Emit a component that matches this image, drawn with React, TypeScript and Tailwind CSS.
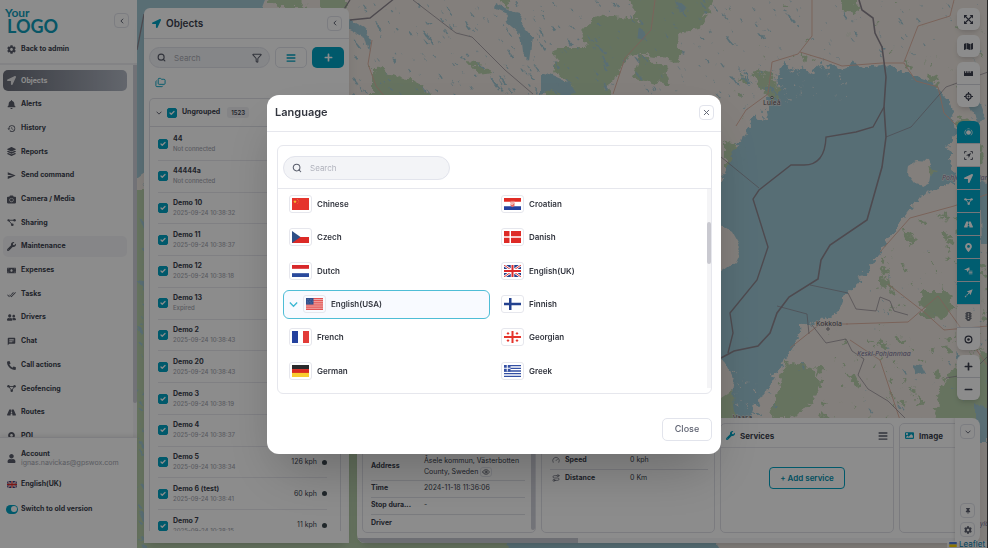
import React from "react"
import {
  FaBell,
  FaCamera,
  FaCog,
  FaImage,
  FaLayerGroup,
  FaLocationArrow,
  FaMap,
  FaMapMarkerAlt,
  FaMinus,
  FaMoneyBill,
  FaPhoneAlt,
  FaPlus,
  FaRoad,
  FaThumbtack,
  FaTrafficLight,
  FaUser,
  FaUserFriends,
  FaWrench,
} from "react-icons/fa"
import { MdChat, MdDoneAll, MdHistory, MdSend } from "react-icons/md"
import { Check, Eye, Filter, Folders, Gauge, Route, Search, X } from "lucide-react"

type IconType = React.ComponentType<{ className?: string }>

/* ---------- small drawn icons ---------- */

const NodesIcon: IconType = ({ className }) => (
  <svg viewBox="0 0 16 16" className={className} fill="currentColor">
    <path d="M3 4.5h10L8.5 11.5z" fill="none" stroke="currentColor" strokeWidth="1.6" />
    <circle cx="2.6" cy="4.2" r="2.2" />
    <circle cx="13.4" cy="4.2" r="2.2" />
    <circle cx="8.4" cy="12" r="2.2" />
  </svg>
)

const ShareIcon: IconType = ({ className }) => (
  <svg viewBox="0 0 16 16" className={className} fill="currentColor">
    <path d="M2.5 4h10M3 4.5l6 7" fill="none" stroke="currentColor" strokeWidth="1.6" />
    <circle cx="2.6" cy="4.2" r="2" />
    <circle cx="13.4" cy="4.2" r="2.2" />
    <circle cx="9.4" cy="12" r="2.4" />
  </svg>
)

const RadarIcon: IconType = ({ className }) => (
  <svg viewBox="0 0 16 16" className={className} fill="none">
    <circle cx="8" cy="8" r="4.2" fill="currentColor" />
    <path
      d="M3.6 13A6.8 6.8 0 0 1 3.6 3M12.4 3a6.8 6.8 0 0 1 0 10M6 1.6a6.8 6.8 0 0 1 4 0"
      stroke="currentColor"
      strokeWidth="1.3"
    />
  </svg>
)

const FocusIcon: IconType = ({ className }) => (
  <svg viewBox="0 0 16 16" className={className} fill="none">
    <path
      d="M1 4.5V1h3.5M11.5 1H15v3.5M15 11.5V15h-3.5M4.5 15H1v-3.5"
      stroke="currentColor"
      strokeWidth="1.5"
    />
    <path d="M12.5 3.500 3.500 7.600l4.300.7L8.500 12.500z" fill="currentColor" />
  </svg>
)

const TagArrowIcon: IconType = ({ className }) => (
  <svg viewBox="0 0 16 16" className={className} fill="currentColor">
    <path d="M9.500 2 0 6.800l5 .7L6.500 11 8 7.500h2z" />
    <path d="M8.500 8.500H15v1.400H8.500zM8.500 11H15v1.400H8.500zM8.500 13.300H15v1.200H8.500z" />
  </svg>
)

const TailIcon: IconType = ({ className }) => (
  <svg viewBox="0 0 16 16" className={className} fill="currentColor">
    <path d="M15.500.5 5 4.500l4.500 2 2 4.500z" />
    <path d="m9.500 6.500-8 8" stroke="currentColor" strokeWidth="1.800" strokeDasharray="3 1" />
  </svg>
)

const TargetIcon: IconType = ({ className }) => (
  <svg viewBox="0 0 16 16" className={className} fill="none">
    <circle cx="8" cy="8" r="6" stroke="currentColor" strokeWidth="2.200" />
    <circle cx="8" cy="8" r="2.300" fill="currentColor" />
  </svg>
)

const CrosshairIcon: IconType = ({ className }) => (
  <svg viewBox="0 0 16 16" className={className} fill="none">
    <circle cx="8" cy="8" r="4.600" stroke="currentColor" strokeWidth="2" />
    <path d="M8 0v4M8 12v4M0 8h4M12 8h4" stroke="currentColor" strokeWidth="2" />
    <circle cx="8" cy="8" r="1.800" fill="currentColor" />
  </svg>
)

const ExpandIcon: IconType = ({ className }) => (
  <svg viewBox="0 0 16 16" className={className} fill="currentColor">
    <path d="M0 0h6L0 6zM16 0v6l-6-6zM0 16v-6l6 6zM16 16h-6l6-6z" />
    <path d="m2 2 12 12M14 2 2 14" stroke="currentColor" strokeWidth="2.400" />
  </svg>
)

const RulerIcon: IconType = ({ className }) => (
  <svg viewBox="0 0 16 16" className={className} fill="currentColor">
    <path d="M0 4h2.200v3h1.600V4h2.400v3h1.600V4h2.400v3h1.600V4H16v8.500H0z" />
  </svg>
)

const BarsIcon: IconType = ({ className }) => (
  <svg viewBox="0 0 16 16" className={className} fill="currentColor">
    <path d="M1 2h14v2.200H1zM1 6.900h14v2.200H1zM1 11.800h14V14H1z" />
  </svg>
)

const ChevronDown: IconType = ({ className }) => (
  <svg viewBox="0 0 16 16" className={className} fill="none" stroke="currentColor">
    <path d="m1.500 4.500 6.500 6.500 6.500-6.500" strokeWidth="2.400" />
  </svg>
)

const ChevronLeft: IconType = ({ className }) => (
  <svg viewBox="0 0 16 16" className={className} fill="none" stroke="currentColor">
    <path d="M11 2 5 8l6 6" strokeWidth="2.600" />
  </svg>
)

/* ---------- flags ---------- */

const flags: Record<string, React.ReactNode> = {
  Chinese: (
    <>
      <path fill="#e5342c" d="M0 0h34v22H0z" />
      <path fill="#f6c532" d="m6 3 1 2.600h2.600L7.500 7l.8 2.600L6 8 3.700 9.600 4.500 7 2.400 5.600H5z" />
      <path fill="#f6c532" d="M11 2h1v1h-1zM13 4h1v1h-1zM13 7h1v1h-1zM11 9h1v1h-1z" />
    </>
  ),
  Croatian: (
    <>
      <path fill="#fff" d="M0 0h34v22H0z" />
      <path fill="#e02b24" d="M0 0h34v7H0z" />
      <path fill="#24419e" d="M0 15h34v7H0z" />
      <path fill="#e66a62" d="M13 5h8v9l-4 3-4-3z" />
      <path fill="#fff" d="M15 7h2v2h-2zM19 7h2v2h-2zM13 9h2v2h-2zM17 9h2v2h-2zM15 11h2v2h-2z" />
    </>
  ),
  Czech: (
    <>
      <path fill="#fff" d="M0 0h34v11H0z" />
      <path fill="#dc2a26" d="M0 11h34v11H0z" />
      <path fill="#2f4f86" d="m0 0 17 11L0 22z" />
    </>
  ),
  Danish: (
    <>
      <path fill="#de2a26" d="M0 0h34v22H0z" />
      <path fill="#fff" d="M11 0h3v22h-3z M0 9.500h34v3H0z" />
    </>
  ),
  Dutch: (
    <>
      <path fill="#fff" d="M0 0h34v22H0z" />
      <path fill="#d8282a" d="M0 0h34v7H0z" />
      <path fill="#2a4a9c" d="M0 15h34v7H0z" />
    </>
  ),
  "English(UK)": (
    <>
      <path fill="#27408b" d="M0 0h34v22H0z" />
      <path stroke="#fff" strokeWidth="4.500" d="m0 0 34 22M34 0 0 22" />
      <path stroke="#dc2a2a" strokeWidth="1.800" d="m0 0 34 22M34 0 0 22" />
      <path fill="#fff" d="M13.500 0h7v22h-7zM0 7.500h34v7H0z" />
      <path fill="#dc2a2a" d="M15 0h4v22h-4zM0 9h34v4H0z" />
    </>
  ),
  "English(USA)": (
    <>
      <path fill="#f3b6b4" d="M0 0h34v22H0z" />
      <path
        stroke="#dd3f3f"
        strokeWidth="1.700"
        d="M0 1h34M0 4.400h34M0 7.800h34M0 11.200h34M0 14.600h34M0 18h34M0 21.200h34"
      />
      <path fill="#2f4f8c" d="M0 0h15v12H0z" />
      <path stroke="#8fa3cc" strokeDasharray="1 2" d="M2 3h12M3 6h11M2 9h12" />
    </>
  ),
  Finnish: (
    <>
      <path fill="#fff" d="M0 0h34v22H0z" />
      <path fill="#24428f" d="M10 0h5v22h-5zM0 8.500h34v5H0z" />
    </>
  ),
  French: (
    <>
      <path fill="#fff" d="M0 0h34v22H0z" />
      <path fill="#24419e" d="M0 0h12v22H0z" />
      <path fill="#e23b38" d="M22 0h12v22H22z" />
    </>
  ),
  Georgian: (
    <>
      <path fill="#fff" d="M0 0h34v22H0z" />
      <path fill="#e5342c" d="M15 0h4v22h-4zM0 9h34v4H0z" />
      <path
        fill="#e5342c"
        d="M7 2h2v5H7zM5.500 3.500h5v2h-5zM25 2h2v5h-2zM23.500 3.500h5v2h-5zM7 15h2v5H7zM5.500 16.500h5v2h-5zM25 15h2v5h-2zM23.500 16.500h5v2h-5z"
      />
    </>
  ),
  German: (
    <>
      <path fill="#2a2a2c" d="M0 0h34v8H0z" />
      <path fill="#d9281f" d="M0 7.500h34V15H0z" />
      <path fill="#f8cc2e" d="M0 14.500h34V22H0z" />
    </>
  ),
  Greek: (
    <>
      <path fill="#fff" d="M0 0h34v22H0z" />
      <path
        stroke="#3450a4"
        strokeWidth="2.500"
        d="M0 1.200h34M0 6.100h34M0 11h34M0 15.900h34M0 20.800h34"
      />
      <path fill="#3450a4" d="M0 0h13v12H0z" />
      <path fill="#fff" d="M5.500 0h2v12h-2zM0 5h13v2H0z" />
    </>
  ),
}

const Flag: React.FC<{ name: string; className?: string }> = ({ name, className }) => (
  <svg viewBox="0 0 34 22" preserveAspectRatio="none" className={className} aria-hidden="true">
    {flags[name]}
  </svg>
)

/* ---------- map ---------- */

// small repeatable generator, so lakes and woods keep their place between renders
const createRandom = (seed: number) => () => {
  seed = (seed * 16807) % 2147483647
  return seed / 2147483647
}

const scatter = (
  seed: number,
  count: number,
  box: [number, number, number, number],
  size: number,
  stretch: number
) => {
  const random = createRandom(seed * 7919)
  let d = ""
  for (let i = 0; i < count; i++) {
    const x = box[0] + random() * box[2]
    const y = box[1] + random() * box[3]
    const r = 0.5 + random() * random() * size
    const lean = (0.3 + random() * 0.7) * stretch * r
    d += `M${x.toFixed(1)} ${y.toFixed(1)}l${r.toFixed(1)} ${(r * 0.3).toFixed(1)} ${lean.toFixed(1)} ${(lean * 1.2).toFixed(1)} ${(-r).toFixed(1)} ${(r * 0.4).toFixed(1)}z`
  }
  return d
}

const SEA =
  "M783 58 790 72 802 67 812 72 822 63 838 70 854 63 870 68 883 65 903 72 918 78 932 83 948 100 954 117 956 133 948 150 954 167 952 183 932 190 920 197 907 213 895 230 875 260 858 283 846 293 838 313 818 320 802 327 789 353 777 373 765 393 757 403 751 420 740 440 715 560 507 560 500 300 680 220 721 182 736 147 747 133 752 118 768 120 766 100 780 98 776 82Z"

const Map = () => (
  <svg
    viewBox="137 0 851 548"
    preserveAspectRatio="xMinYMin slice"
    className="absolute inset-0 size-full"
    fill="none"
    aria-hidden="true"
  >
    <defs>
      <filter id="ragged" x="-5%" y="-5%" width="110%" height="110%">
        <feTurbulence type="fractalNoise" baseFrequency="0.14" numOctaves="3" seed="4" />
        <feDisplacementMap
          in="SourceGraphic"
          scale="12"
          xChannelSelector="R"
          yChannelSelector="G"
        />
      </filter>
      <filter id="wavy" x="-5%" y="-5%" width="110%" height="110%">
        <feTurbulence type="fractalNoise" baseFrequency="0.06" numOctaves="3" seed="9" />
        <feDisplacementMap
          in="SourceGraphic"
          scale="9"
          xChannelSelector="R"
          yChannelSelector="G"
        />
      </filter>
    </defs>
    <path fill="#efe8e2" d="M137 0h851v548H137z" />
    <g filter="url(#ragged)">
      <path
        fill="#bad2ae"
        d="M596 15l41 5-10-24h88l-16 34-21 3 2 28-49-8-17 27-16 13-20-3-25-17 4-26h29l-4-17zM640 55l-9 22 40 8-6-17-15-8zM545 84l62 3 6 12h-68zM372 66l20 8 32 12 8 14h-60zM497-4h14l-4 14zM467 62l18 2 5 10-10 2zM838-4h22l-4 16-14-4zM755 68l14 4 14 24-10 8-16-20zM725 140l12 6-2 18-10 4zM800 50l8 4-2 8zM905 62l6 4-2 6zM930 74l8 4-3 8-8-4z"
      />
      <path fill="#bad2ae" d="M120 190h30v-12l220 270v10h145v100H120zM345 440h20v110h-20z" />
      <path
        fill="#bad2ae"
        d="M920 292h26l8 14-12 14-18-2zM952 370l40-18v80h-60l8-40zM785 362l26 4 12 16-12 22-20 14h-22l8-24zM957 116l18 6 8 40-20 10zM962 240l14 6-2 14-12 2zM900 230l14 4-4 8zM880 276l10 4 2 10-12-4zM846 372l14 8-4 8zM262-6h30l16 14h-30zM320-4h26v14h-26z"
      />
      <path fill="#bad2ae" d={scatter(77, 130, [870, 200, 118, 220], 7, 0.8)} />
      <path fill="#bad2ae" d={scatter(19, 70, [800, 330, 188, 90], 6, 0.8)} />
      <path fill="#bad2ae" d={scatter(41, 50, [720, 0, 268, 130], 5, 0.8)} />
    </g>
    <g filter="url(#wavy)">
      <path
        fill="#a3c8d4"
        d="M496 2l10 6 14 4-2 10 14 16-3 22-8-8-2-18-14-12 4-8-14-6zM541 72l12 4 18 8 6 10-10 2-14-6-12 4zM350 20l14 8 8 12-3 12-4-14-15-8zM640 28l7 4-3 8-6-2zM676 0l8 6-4 6zM966 88l10-4 2 14 8 22-8 4-8-18zM956 350l10 10 8 6-4 8-12-8zM912 364l10 2 4 8-10 2zM975 402l14 10v30h-14zM980 180l10 4v60h-8z"
      />
      <path fill="#a3c8d4" d={scatter(5, 210, [350, 0, 250, 96], 2.4, 3)} />
      <path fill="#a3c8d4" d={scatter(8, 130, [600, 0, 200, 96], 2.2, 3)} />
      <path fill="#a3c8d4" d={scatter(23, 50, [800, 0, 188, 60], 1.6, 3)} />
      <path fill="#a3c8d4" d={scatter(31, 40, [860, 250, 128, 168], 1.6, 2)} />
      <path fill="#a3c8d4" d={scatter(35, 40, [960, 60, 30, 360], 3, 2)} />
      <path fill="#a3c8d4" d={scatter(91, 60, [137, 180, 10, 368], 5, 2)} />
      <path fill="#a3c8d4" d="M120-10h148l-30 80-90 100-28 20z" />
    </g>
    <g filter="url(#ragged)">
      <path fill="#9fc9d6" d={SEA} />
      <path fill="#9fc9d6" d={scatter(55, 80, [738, 66, 60, 100], 2.6, 2.4)} />
      <path fill="#9fc9d6" d={scatter(58, 50, [732, 330, 70, 88], 3, 2)} />
      <path fill="#efe8e2" d={scatter(64, 60, [745, 64, 100, 40], 1.6, 1.4)} />
      <path fill="#efe8e2" d={scatter(66, 40, [725, 370, 50, 50], 2, 1.4)} />
    </g>
    <g filter="url(#wavy)">
      <path
        fill="#efe8e2"
        d="M718 222l14 10 9 16-6 14-17 12zM910 166l8-5 10 1 3 7-2 12-8 4-6-2-6-8zM716 352l10 14 8 14-6 40h-12z"
      />
      <path fill="#bad2ae" d="M720 398l12-8 4 30h-16zM928 168l9 2-6 4z" />
    </g>
    <g stroke="#dfb5a5" strokeWidth="1">
      <path d="M372 40l-4 24 8 22 10 12M655 0l-4 30-26 28-12 36M812 0v36l-14 18-26 8-4 32-22 16-10 16M800 52l26 8 16 6 40-3 22 0 12 18 22 6 6 26 12 12M904 62l14-36 32-10 4-16M880 252l30-34 44-12 34-12M846 324l62-2 30-26 50 70M888 284l36 28 20 18 44-4M790 348l30-24 28 0M900 420l-20-60-30-20" />
    </g>
    <g stroke="#8e8790" strokeWidth="1">
      <path
        strokeWidth="1.600"
        d="M859 0l3 10 11 8 2 15 7 14 4 30-2 30 2 30-4 30-15 53-37 25-9 15-3 19-29 18-12 16-7 20-12 13-24 5-13 7"
      />
      <path
        strokeWidth="1.400"
        d="M884 107l-11 20-17 5-30 5q-1 28-22 28h-13l-32 25-6 9 15 48-11 33-27 33 3 20-5 20"
      />
      <path
        strokeWidth="0.700"
        d="M886 137l25-10 35-40 42-15M721 157l38 31M810 285l38 8M777 306l30 8 2 20M413 0l43 33 16 4 33 33 28 24M848 293l8 16 20 2 4-14 10 4 4 10 14 4M812 325l14 18 20-4 6 12 12 8-6 16 10 14 20 12 18 18M988 356l-18 18-24 4"
      />
      <path strokeWidth="1.300" d="M350 20l20-2 25-20M350 0l-13 20M144 14l-7 36" />
    </g>
    <g
      fill="#55525c"
      stroke="#efe8e2"
      strokeWidth="1"
      paintOrder="stroke"
      fontFamily="'Noto Sans', sans-serif"
      fontSize="7"
    >
      <text x="763" y="105">Luleå</text>
      <text x="816" y="326">Kokkola</text>
      <text x="733" y="420">Vaasa</text>
      <g fontStyle="italic" fill="#77739a">
        <text x="857" y="356">Keski-Pohjanmaa</text>
        <text x="942" y="180">Pohjois-Pohjanmaa</text>
        <text x="980" y="526">ylä</text>
      </g>
    </g>
    <g stroke="#55525c" strokeWidth="0.800" fill="#fff">
      <circle cx="772" cy="97.500" r="1.200" />
      <circle cx="828" cy="329" r="1.200" />
    </g>
  </svg>
)

/* ---------- shared bits ---------- */

const CheckBox: React.FC<{ label: string }> = ({ label }) => (
  <span className="relative flex size-[10px] shrink-0">
    <input
      type="checkbox"
      defaultChecked
      aria-label={label}
      className="peer size-[10px] appearance-none rounded-[2px] border border-[#00a3c4] checked:bg-[#00a3c4]"
    />
    <Check
      className="pointer-events-none absolute inset-[2px] hidden size-[6px] text-white peer-checked:block"
      strokeWidth={5}
    />
  </span>
)

const SquareButton: React.FC<{ label: string; children: React.ReactNode }> = ({
  label,
  children,
}) => (
  <button
    type="button"
    aria-label={label}
    className="flex size-[15px] shrink-0 items-center justify-center rounded-[4px] border border-[#e2e4ec] text-[#5d6170]"
  >
    {children}
  </button>
)

/* ---------- sidebar ---------- */

const navItems: { name: string; Icon: IconType }[] = [
  { name: "Objects", Icon: FaLocationArrow },
  { name: "Alerts", Icon: FaBell },
  { name: "History", Icon: MdHistory },
  { name: "Reports", Icon: FaLayerGroup },
  { name: "Send command", Icon: MdSend },
  { name: "Camera / Media", Icon: FaCamera },
  { name: "Sharing", Icon: ShareIcon },
  { name: "Maintenance", Icon: FaWrench },
  { name: "Expenses", Icon: FaMoneyBill },
  { name: "Tasks", Icon: MdDoneAll },
  { name: "Drivers", Icon: FaUserFriends },
  { name: "Chat", Icon: MdChat },
  { name: "Call actions", Icon: FaPhoneAlt },
  { name: "Geofencing", Icon: NodesIcon },
  { name: "Routes", Icon: FaRoad },
  { name: "POI", Icon: FaMapMarkerAlt },
]

const navStyle = (name: string) => {
  if (name === "Objects") return "bg-linear-to-r from-[#6c707c] to-[#b4bac6] text-white"
  if (name === "Maintenance") return "bg-[#f5f5f7]"
  return ""
}

const Sidebar = () => (
  <aside className="flex w-[137px] shrink-0 flex-col bg-white text-[7px] font-bold text-[#3b3f4e]">
    <div className="flex h-[65px] shrink-0 flex-col justify-between border-b-2 border-[#eeeef2] pt-[8px] pr-[8px] pb-[9px] pl-[5px]">
      <div className="flex items-start justify-between">
        <div className="font-['Lato'] text-[#0f9dba]">
          <div className="text-[12px] leading-[10px]">Your</div>
          <div className="pl-[2px] text-[18px] leading-[16px]">LOGO</div>
        </div>
        <div className="pt-[5px]">
          <SquareButton label="Collapse menu">
            <ChevronLeft className="size-[6px]" />
          </SquareButton>
        </div>
      </div>
      <a href="#admin" className="flex items-center gap-[5px] pl-[2px] leading-[10px]">
        <FaCog className="size-[9px] text-[#5a5e6c]" />
        Back to admin
      </a>
    </div>
    <div className="flex min-h-0 flex-1">
      <nav className="flex-1 overflow-hidden pt-[4px] pr-[6px] pl-[3px]">
        <div className="flex h-[379px] flex-col">
          {navItems.map(({ name, Icon }) => (
            <a key={name} href={`#${name}`} className="flex flex-1 items-center">
              <span
                className={`flex h-[21px] w-full items-center gap-[5px] rounded-[5px] pl-[4px] ${navStyle(name)}`}
              >
                <Icon className="size-[9px] shrink-0 opacity-85" />
                {name}
              </span>
            </a>
          ))}
        </div>
      </nav>
      <div className="w-[4px] bg-[#f6f6f8]">
        <div className="h-[338px] rounded-b-full bg-[#d0d1da]" />
      </div>
    </div>
    <div className="z-10 flex h-[111px] shrink-0 flex-col border-t border-[#e6e6ec] bg-white pt-[11px] pl-[7px] shadow-[0_-2px_4px_rgba(0,0,0,0.08)]">
      <a href="#account" className="flex items-center gap-[5px]">
        <FaUser className="size-[9px] text-[#5a5e6c]" />
        <span className="leading-[9px]">
          Account
          <span className="block font-normal text-[#a5a7b1]">ignas.navickas@gpswox.com</span>
        </span>
      </a>
      <button type="button" className="mt-[12px] flex items-center gap-[4px] text-left leading-[10px]">
        <Flag name="English(UK)" className="h-[7px] w-[10px] rounded-[2px]" />
        English(UK)
      </button>
      <label className="mt-[15px] -ml-[1px] flex items-center gap-[3px] leading-[10px]">
        <input type="checkbox" role="switch" defaultChecked className="peer sr-only" />
        <span className="flex h-[9px] w-[12px] items-center justify-end rounded-full bg-[#00a3c4] pr-[1px]">
          <span className="size-[6px] rounded-full bg-white" />
        </span>
        Switch to old version
      </label>
    </div>
  </aside>
)

/* ---------- objects panel ---------- */

const objects: { name: string; status: string; speed?: string }[] = [
  { name: "44", status: "Not connected" },
  { name: "44444a", status: "Not connected" },
  { name: "Demo 10", status: "2025-09-24 10:38:32" },
  { name: "Demo 11", status: "2025-09-24 10:38:37" },
  { name: "Demo 12", status: "2025-09-24 10:38:18" },
  { name: "Demo 13", status: "Expired" },
  { name: "Demo 2", status: "2025-09-24 10:38:43" },
  { name: "Demo 20", status: "2025-09-24 10:38:43" },
  { name: "Demo 3", status: "2025-09-24 10:38:19" },
  { name: "Demo 4", status: "2025-09-24 10:38:37" },
  { name: "Demo 5", status: "2025-09-24 10:38:34", speed: "126 kph" },
  { name: "Demo 6 (test)", status: "2025-09-24 10:38:41", speed: "60 kph" },
  { name: "Demo 7", status: "2025-09-24 10:38:15", speed: "11 kph" },
]

const ObjectsPanel = () => (
  <section className="flex w-[205px] shrink-0 flex-col rounded-t-[6px] bg-white pb-[12px] text-[#3b3f4e] shadow-lg">
    <header className="flex h-[31px] shrink-0 items-center gap-[5px] border-b border-[#e6e6ec] pr-[7px] pl-[8px]">
      <FaLocationArrow className="size-[9px] text-[#00a3c4]" />
      <h2 className="flex-1 text-[10px] font-semibold">Objects</h2>
      <SquareButton label="Collapse panel">
        <ChevronLeft className="size-[6px]" />
      </SquareButton>
    </header>
    <div className="mx-[5px] mt-[8px] flex h-[21px] shrink-0 gap-[5px]">
      <label className="flex flex-1 items-center gap-[8px] rounded-full border border-[#e2e4ec] bg-[#f3f4f7] px-[7px]">
        <Search className="size-[9px] shrink-0 text-[#5a5e6c]" strokeWidth={3} />
        <input
          type="text"
          aria-label="Search objects"
          placeholder="Search"
          className="w-0 flex-1 bg-transparent text-[8px] outline-none placeholder:text-[#a9abb5]"
        />
        <Filter className="size-[10px] shrink-0 text-[#5a5e6c]" strokeWidth={2.5} />
      </label>
      <button
        type="button"
        aria-label="List view"
        className="flex w-[32px] items-center justify-center rounded-[5px] border border-[#e2e4ec]"
      >
        <BarsIcon className="size-[10px] text-[#00a3c4]" />
      </button>
      <button
        type="button"
        aria-label="Add object"
        className="flex w-[32px] items-center justify-center rounded-[5px] bg-[#00a3c4]"
      >
        <FaPlus className="size-[9px] text-white" />
      </button>
    </div>
    <button type="button" aria-label="Groups" className="mt-[9px] ml-[11px] shrink-0 self-start">
      <Folders className="size-[11px] text-[#00a3c4]" strokeWidth={2} />
    </button>
    <div className="mt-[10px] mr-[8px] ml-[5px] flex min-h-0 flex-1 flex-col overflow-hidden rounded-t-[5px] border border-b-0 border-[#e0e1e8]">
      <div className="flex h-[28px] shrink-0 items-center gap-[5px] border-b border-[#e0e1e8] pl-[6px]">
        <ChevronDown className="size-[6px] text-[#5a5e6c]" />
        <CheckBox label="Ungrouped" />
        <span className="text-[7px] font-bold">Ungrouped</span>
        <span className="ml-[2px] rounded-[3px] bg-[#f0f1f4] px-[4px] text-[6px] leading-[11px] font-semibold">
          1523
        </span>
      </div>
      <ul className="mt-[2px] flex h-[413px] shrink-0 flex-col pr-[13px] pl-[8px]">
        {objects.map(({ name, status, speed }) => (
          <li key={name} className="flex flex-1 items-center gap-[5px] border-b border-[#e9e9ef]">
            <CheckBox label={name} />
            <span className="flex-1">
              <span className="block text-[7px] leading-[10px] font-bold">{name}</span>
              <span className="block text-[6px] leading-[10px] font-medium text-[#a5a7b1]">
                {status}
              </span>
            </span>
            {speed && (
              <>
                <span className="text-[7px]">{speed}</span>
                <span className="size-[5px] rounded-full bg-[#3b474e]" />
              </>
            )}
          </li>
        ))}
      </ul>
    </div>
  </section>
)

/* ---------- bottom widgets ---------- */

const details = [
  { label: "Time", value: "2024-11-18 11:36:06" },
  { label: "Stop dura...", value: "-" },
  { label: "Driver", value: "" },
]

const WidgetHeader: React.FC<{ Icon: IconType; title: string; menu?: boolean }> = ({
  Icon,
  title,
  menu,
}) => (
  <header className="flex h-[24px] items-center gap-[5px] border-b border-[#e6e6ec] px-[5px]">
    <Icon className="size-[9px] text-[#00a3c4]" />
    <h3 className="flex-1 text-[8px] font-bold">{title}</h3>
    {menu && (
      <button type="button" aria-label={`${title} menu`}>
        <BarsIcon className="size-[10px] text-[#5a5e6c]" />
      </button>
    )}
  </header>
)

const card = "w-[174px] shrink-0 rounded-[5px] border border-[#e0e1e8]"

const Widgets = () => (
  <section className="flex h-[125px] w-full overflow-hidden rounded-[8px] bg-white text-[8px] text-[#3b3f4e] shadow-lg">
    <div className="flex min-w-0 flex-1 flex-col overflow-hidden">
      <div className="flex h-[115px] gap-[5px] overflow-hidden pt-[5px] pl-[5px]">
        <div className={`${card} flex`}>
          <table className="mt-[29px] mr-[6px] ml-[8px] h-[78px] flex-1 table-fixed text-left text-[7px]">
            <tbody>
              <tr className="h-[27px] border-b border-[#e0e1e8]">
                <th className="w-[53px] font-bold">Address</th>
                <td className="leading-[11px]">
                  Åsele kommun, Västerbotten
                  <br />
                  County, Sweden{" "}
                  <button
                    type="button"
                    aria-label="Show address"
                    className="rounded-[3px] border border-[#e2e4ec] px-[1px] align-middle"
                  >
                    <Eye className="size-[8px]" />
                  </button>
                </td>
              </tr>
              {details.map(({ label, value }) => (
                <tr key={label} className="h-[17px] border-b border-[#e0e1e8] last:border-0">
                  <th className="font-bold">{label}</th>
                  <td>{value}</td>
                </tr>
              ))}
            </tbody>
          </table>
          <div className="mb-[2px] w-[4px] rounded-b-full bg-[#d0d1da]" />
        </div>
        <div className={card}>
          <table className="mt-[28px] ml-[8px] w-[158px] table-fixed text-left text-[7px]">
            <tbody>
              <tr className="h-[17px] border-b border-[#e0e1e8]">
                <th className="w-[80px] font-bold">
                  <Gauge className="mr-[5px] ml-[2px] inline size-[8px] text-[#5a5e6c]" />
                  Speed
                </th>
                <td>0 kph</td>
              </tr>
              <tr className="h-[17px]">
                <th className="font-bold">
                  <Route className="mr-[5px] ml-[2px] inline size-[8px] text-[#5a5e6c]" />
                  Distance
                </th>
                <td>0 Km</td>
              </tr>
            </tbody>
          </table>
        </div>
        <div className={card}>
          <WidgetHeader Icon={FaWrench} title="Services" menu />
          <div className="flex justify-center pt-[19px]">
            <button
              type="button"
              className="h-[22px] rounded-[4px] border border-[#00a3c4] px-[10px] text-[8px] font-semibold text-[#0090ae]"
            >
              + Add service
            </button>
          </div>
        </div>
        <div className={card}>
          <WidgetHeader Icon={FaImage} title="Image" />
        </div>
      </div>
      <div className="mt-[5px] h-[5px] bg-[#f6f6f8]">
        <div className="h-[5px] w-[221px] bg-[#c6c8d2]" />
      </div>
    </div>
    <div className="flex w-[25px] shrink-0 flex-col items-center gap-[4px] py-[6px] shadow-[-1px_0_3px_rgba(0,0,0,0.1)]">
      <SquareButton label="Hide widgets">
        <ChevronDown className="size-[6px]" />
      </SquareButton>
      <span className="flex-1" />
      <SquareButton label="Pin widgets">
        <FaThumbtack className="size-[6px]" />
      </SquareButton>
      <SquareButton label="Widget settings">
        <FaCog className="size-[8px]" />
      </SquareButton>
    </div>
  </section>
)

/* ---------- map toolbar ---------- */

interface Tool {
  label: string
  Icon: IconType
  look?: "active" | "clear"
}

const toolGroups: Tool[][] = [
  [{ label: "Full screen", Icon: ExpandIcon }],
  [{ label: "Map type", Icon: FaMap }],
  [
    { label: "Ruler", Icon: RulerIcon },
    { label: "My location", Icon: CrosshairIcon },
  ],
  [
    { label: "Show objects", Icon: RadarIcon, look: "active" },
    { label: "Fit objects", Icon: FocusIcon },
    { label: "Arrows", Icon: FaLocationArrow, look: "active" },
    { label: "Geofences", Icon: NodesIcon, look: "active" },
    { label: "Routes", Icon: FaRoad, look: "active" },
    { label: "POI", Icon: FaMapMarkerAlt, look: "active" },
    { label: "Names", Icon: TagArrowIcon, look: "active" },
    { label: "Tails", Icon: TailIcon, look: "active" },
    { label: "Traffic", Icon: FaTrafficLight, look: "clear" },
    { label: "Center", Icon: TargetIcon },
  ],
  [
    { label: "Zoom in", Icon: FaPlus },
    { label: "Zoom out", Icon: FaMinus },
  ],
]

const toolLook = {
  active: "bg-[#00a9cc] text-white",
  clear: "bg-white/30 text-[#6b6e78]",
  plain: "bg-white text-[#3b3f4e]",
}

const Toolbar = () => (
  <div className="flex w-[23px] flex-col gap-[5px]">
    {toolGroups.map((group, index) => (
      <div
        key={index}
        className={`flex flex-col overflow-hidden rounded-[6px] shadow-md ${index === 3 ? "mt-[9px]" : ""}`}
      >
        {group.map(({ label, Icon, look }) => (
          <button
            key={label}
            type="button"
            aria-label={label}
            className={`flex h-[23px] items-center justify-center border-b border-[#d5d7de] last:h-[22px] last:border-0 ${toolLook[look ?? "plain"]}`}
          >
            <Icon className="size-[9px]" />
          </button>
        ))}
      </div>
    ))}
  </div>
)

/* ---------- language dialog ---------- */

const languages = [
  "Chinese",
  "Croatian",
  "Czech",
  "Danish",
  "Dutch",
  "English(UK)",
  "English(USA)",
  "Finnish",
  "French",
  "Georgian",
  "German",
  "Greek",
]

const LanguageDialog = () => {
  const [selected, setSelected] = React.useState("English(USA)")

  return (
    <div
      role="dialog"
      aria-label="Language"
      className="flex w-[454px] flex-col rounded-[12px] bg-white text-[#33363f] shadow-2xl"
    >
      <header className="flex h-[37px] items-center justify-between border-b border-[#e6e7ed] pr-[7px] pl-[8px]">
        <h1 className="text-[11px] font-semibold">Language</h1>
        <SquareButton label="Close dialog">
          <X className="size-[9px]" strokeWidth={2.5} />
        </SquareButton>
      </header>
      <div className="mt-[13px] mr-[9px] ml-[10px] overflow-hidden rounded-[6px] border border-[#e6e7ed] pb-[5px]">
        <div className="border-b border-[#e6e7ed] px-[5px] pt-[10px] pb-[8px]">
          <label className="flex h-[24px] w-[167px] items-center gap-[8px] rounded-full border border-[#e2e4ec] bg-[#f3f4f7] px-[8px]">
            <Search className="size-[10px] shrink-0 text-[#5a5e6c]" strokeWidth={2.5} />
            <input
              type="text"
              aria-label="Search languages"
              placeholder="Search"
              className="w-0 flex-1 bg-transparent text-[8px] outline-none placeholder:text-[#b1b3bd]"
            />
          </label>
        </div>
        <div className="flex h-[199px] overflow-hidden">
          <div className="-mt-[1px] grid h-[200px] flex-1 grid-cols-2 grid-rows-6 gap-x-[5px] px-[5px]">
            {languages.map((name) => {
              const active = name === selected
              return (
                <label key={name} className="flex items-center">
                  <input
                    type="radio"
                    name="language"
                    value={name}
                    checked={active}
                    onChange={() => setSelected(name)}
                    className="sr-only"
                  />
                  <span
                    className={`flex h-[29px] w-full items-center gap-[5px] rounded-[6px] border px-[5px] text-[8px] font-semibold ${
                      active ? "border-[#4fbdd6] bg-[#f8faff]" : "border-transparent"
                    }`}
                  >
                    {active && <ChevronDown className="size-[9px] text-[#3db8d3]" />}
                    <span className="rounded-[3px] border border-[#e6e7ed] p-[2px]">
                      <Flag name={name} className="h-[12px] w-[17px]" />
                    </span>
                    {name}
                  </span>
                </label>
              )
            })}
          </div>
          <div className="w-[4px] bg-[#f4f4f6] pt-[33px]">
            <div className="h-[42px] rounded-full bg-[#c9c9d0]" />
          </div>
        </div>
      </div>
      <footer className="flex justify-end px-[9px] pt-[24px] pb-[13px]">
        <button
          type="button"
          className="h-[23px] w-[50px] rounded-[5px] border border-[#e2e4ec] text-[9px] font-medium text-[#5d6170]"
        >
          Close
        </button>
      </footer>
    </div>
  )
}

const App = () => (
  <div className="relative flex h-screen overflow-hidden border-r border-[#454545] bg-white font-['Inter',sans-serif]">
    <Sidebar />
    <main className="relative min-w-0 flex-1">
      <Map />
      <div className="relative flex h-full gap-[8px] pt-[8px] pr-[7px] pb-[5px] pl-[7px]">
        <ObjectsPanel />
        <div className="flex min-w-0 flex-1 flex-col items-end justify-between">
          <Toolbar />
          <Widgets />
        </div>
      </div>
      <a
        href="#leaflet"
        className="absolute right-0 bottom-0 flex items-center gap-[2px] bg-white/70 px-[2px] text-[8px] leading-[7px] text-[#0078a8]"
      >
        <svg viewBox="0 0 12 8" className="h-[5px] w-[8px]" aria-hidden="true">
          <path fill="#4c7be1" d="M0 0h12v4H0z" />
          <path fill="#ffd500" d="M0 4h12v4H0z" />
        </svg>
        Leaflet
      </a>
    </main>
    <div className="fixed inset-0 z-20 flex items-center justify-center bg-black/45">
      <LanguageDialog />
    </div>
  </div>
)

export default App
